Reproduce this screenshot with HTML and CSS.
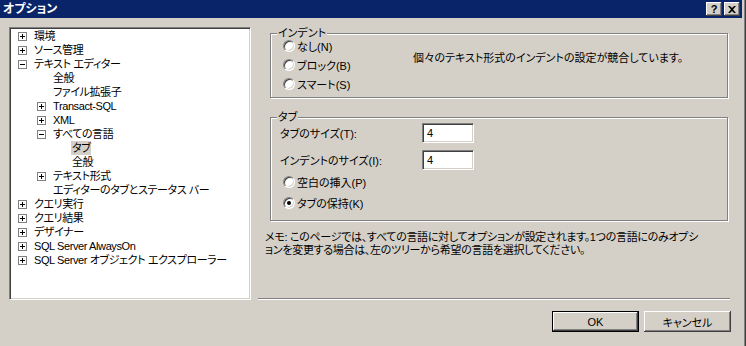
FILE: index.html
```html
<!DOCTYPE html>
<html lang="ja">
<head>
    <meta charset="UTF-8">
    <title>オプション</title>
    <link rel="stylesheet" href="styles.css">
</head>
<body>
<div class="window">
    <div class="titlebar">
        <span class="title">オプション</span>
        <div class="caption-btns">
            <span class="cap-btn">?</span>
            <span class="cap-btn">
                <svg width="8" height="7" viewBox="0 0 8 7"><path d="M0 0H2L4 2L6 0H8L5 3.5L8 7H6L4 5L2 7H0L3 3.5Z"/></svg>
            </span>
        </div>
    </div>

    <div class="content">
        <div class="panes">
            <div class="tree">
                <div class="node l0"><span class="exp plus"></span><span class="label">環境</span></div>
                <div class="node l0"><span class="exp plus"></span><span class="label">ソース管理</span></div>
                <div class="node l0"><span class="exp minus"></span><span class="label">テキスト エディター</span></div>
                <div class="node l1"><span class="exp"></span><span class="label">全般</span></div>
                <div class="node l1"><span class="exp"></span><span class="label">ファイル拡張子</span></div>
                <div class="node l1"><span class="exp plus"></span><span class="label">Transact-SQL</span></div>
                <div class="node l1"><span class="exp plus"></span><span class="label">XML</span></div>
                <div class="node l1"><span class="exp minus"></span><span class="label">すべての言語</span></div>
                <div class="node l2"><span class="exp"></span><span class="label selected">タブ</span></div>
                <div class="node l2"><span class="exp"></span><span class="label">全般</span></div>
                <div class="node l1"><span class="exp plus"></span><span class="label">テキスト形式</span></div>
                <div class="node l1"><span class="exp"></span><span class="label">エディターのタブとステータス バー</span></div>
                <div class="node l0"><span class="exp plus"></span><span class="label">クエリ実行</span></div>
                <div class="node l0"><span class="exp plus"></span><span class="label">クエリ結果</span></div>
                <div class="node l0"><span class="exp plus"></span><span class="label">デザイナー</span></div>
                <div class="node l0"><span class="exp plus"></span><span class="label">SQL Server AlwaysOn</span></div>
                <div class="node l0"><span class="exp plus"></span><span class="label">SQL Server オブジェクト エクスプローラー</span></div>
            </div>

            <div class="page">
                <div class="group indent-group">
                    <span class="group-title">インデント</span>
                    <div class="radios">
                        <div class="radio"><span class="dot"></span>なし(N)</div>
                        <div class="radio"><span class="dot"></span>ブロック(B)</div>
                        <div class="radio"><span class="dot"></span>スマート(S)</div>
                    </div>
                    <div class="conflict">個々のテキスト形式のインデントの設定が競合しています。</div>
                </div>

                <div class="group tab-group">
                    <span class="group-title">タブ</span>
                    <div class="field"><span class="field-label">タブのサイズ(T):</span><span class="textbox">4</span></div>
                    <div class="field"><span class="field-label">インデントのサイズ(I):</span><span class="textbox">4</span></div>
                    <div class="radio first"><span class="dot"></span>空白の挿入(P)</div>
                    <div class="radio"><span class="dot checked"></span>タブの保持(K)</div>
                </div>

                <p class="note">メモ: このページでは、すべての言語に対してオプションが設定されます。1つの言語にのみオプシ<br>ョンを変更する場合は、左のツリーから希望の言語を選択してください。</p>

                <div class="separator"></div>
            </div>
        </div>

        <div class="buttons">
            <span class="btn default"><span class="btn-face">OK</span></span>
            <span class="btn"><span class="btn-face">キャンセル</span></span>
        </div>
    </div>
</div>
</body>
</html>
```

FILE: styles.css
```css
body
{
    margin: 0;
    font-family: "Liberation Sans", "Noto Sans CJK JP", sans-serif;
    font-size: 11px;
    font-feature-settings: "palt";
    color: black;
    background: #d4d0c8;
}

.window
{
    width: 746px;
    height: 346px;
    background: #d4d0c8;
    box-shadow: inset -1px 0 #404040, inset -2px 0 #808080;
    overflow: hidden;
}

/* title bar */
.titlebar
{
    height: 18px;
    margin-right: 4px;
    background: #0a246a;
    display: flex;
    align-items: center;
    justify-content: space-between;
    padding: 0 2px 0 3px;
}

.title
{
    color: white;
    font-weight: bold;
    font-size: 12px;
    line-height: 18px;
}

.caption-btns
{
    display: flex;
    gap: 2px;
}

.cap-btn
{
    width: 16px;
    height: 14px;
    box-sizing: border-box;
    background: #d4d0c8;
    box-shadow: inset -1px -1px #404040, inset 1px 1px #fff, inset -2px -2px #808080;
    display: flex;
    align-items: center;
    justify-content: center;
    font-weight: bold;
    font-size: 11px;
    line-height: 14px;
}

/* body */
.content
{
    padding: 9px 0 0 9px;
}

.panes
{
    display: flex;
    height: 273px;
}

.tree
{
    width: 242px;
    box-sizing: border-box;
    background: white;
    border-style: solid;
    border-width: 1px;
    border-color: #808080 #fff #fff #808080;
    box-shadow: inset 1px 1px #404040, inset -1px -1px #d4d0c8;
    padding: 1px 0 0 1px;
    letter-spacing: -0.4px;
}

.node
{
    height: 14px;
    line-height: 14px;
    display: flex;
    align-items: center;
    white-space: nowrap;
}

.l0 { padding-left: 7px; }
.l1 { padding-left: 26px; }
.l2 { padding-left: 45px; }

.exp
{
    width: 9px;
    height: 9px;
    margin-right: 7px;
    box-sizing: border-box;
    flex: none;
    position: relative;
}

.exp.plus, .exp.minus
{
    border: 1px solid #808080;
    background: white;
}

.exp.plus::before, .exp.minus::before
{
    content: "";
    position: absolute;
    left: 1px;
    top: 3px;
    width: 5px;
    height: 1px;
    background: black;
}

.exp.plus::after
{
    content: "";
    position: absolute;
    left: 3px;
    top: 1px;
    width: 1px;
    height: 5px;
    background: black;
}

.label.selected
{
    background: #d4d0c8;
    padding: 0 1px;
    margin-left: -1px;
}

/* right page */
.page
{
    width: 472px;
    margin-left: 7px;
    display: flex;
    flex-direction: column;
}

.group
{
    position: relative;
    box-sizing: border-box;
    margin: 0 2px 0 12px;
    border: 1px solid #808080;
    box-shadow: inset 1px 1px #fff, 1px 1px #fff;
    padding-left: 12px;
}

.group-title
{
    position: absolute;
    top: -8px;
    left: 6px;
    line-height: 14px;
    padding: 0 1px;
    background: #d4d0c8;
}

.indent-group
{
    margin-top: 6px;
    height: 65px;
    padding-top: 2px;
    display: flex;
}

.radios
{
    width: 130px;
}

.radio
{
    height: 19px;
    display: flex;
    align-items: center;
    white-space: nowrap;
}

.dot
{
    width: 12px;
    height: 12px;
    box-sizing: border-box;
    border-radius: 50%;
    border: 1px solid;
    border-color: #808080 #fff #fff #808080;
    box-shadow: inset 1px 1px #404040, inset -1px -1px #d4d0c8;
    background: white;
    margin-right: 2px;
    position: relative;
}

.dot.checked::after
{
    content: "";
    position: absolute;
    left: 3px;
    top: 3px;
    width: 4px;
    height: 4px;
    border-radius: 50%;
    background: black;
}

.conflict
{
    margin-top: 16px;
    line-height: 13px;
    white-space: nowrap;
}

.tab-group
{
    margin-top: 19px;
    height: 104px;
    padding-top: 5px;
}

.field
{
    display: flex;
    align-items: center;
    height: 20px;
    margin-left: -3px;
    margin-bottom: 7px;
}

.field-label
{
    width: 142px;
}

.textbox
{
    width: 52px;
    height: 20px;
    box-sizing: border-box;
    background: white;
    border-style: solid;
    border-width: 1px;
    border-color: #808080 #fff #fff #808080;
    box-shadow: inset 1px 1px #404040, inset -1px -1px #d4d0c8;
    padding-left: 4px;
    line-height: 18px;
}

.tab-group .radio
{
    height: 21px;
}

.tab-group .radio.first
{
    margin-top: -6px;
}

.note
{
    margin: 10px 0 0 7px;
    line-height: 13px;
    white-space: nowrap;
    letter-spacing: -0.3px;
}

.separator
{
    margin-top: auto;
    height: 1px;
    border-top: 1px solid #808080;
    background: white;
}

/* buttons */
.buttons
{
    display: flex;
    justify-content: flex-end;
    gap: 5px;
    margin-top: 11px;
    padding-right: 15px;
}

.btn
{
    width: 87px;
    height: 21px;
    box-sizing: border-box;
    display: flex;
}

.btn-face
{
    flex: 1;
    display: flex;
    align-items: center;
    justify-content: center;
    box-shadow: inset -1px -1px #404040, inset 1px 1px #fff, inset -2px -2px #808080;
}

.btn.default
{
    border: 1px solid black;
}
```
